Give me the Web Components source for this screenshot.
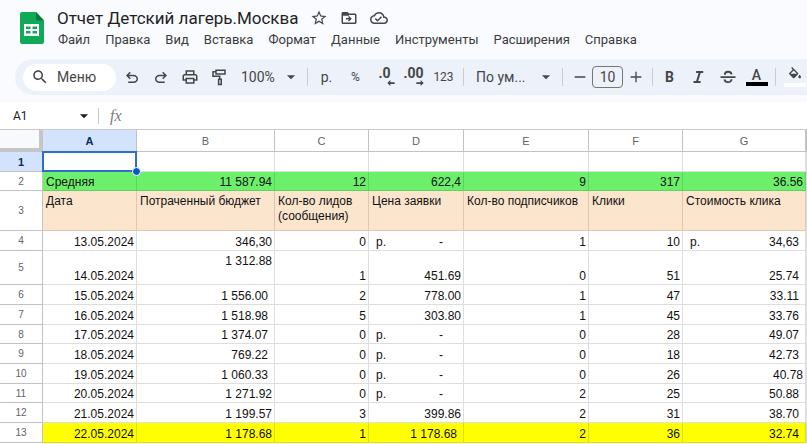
<!DOCTYPE html>
<html lang="ru">
<head>
<meta charset="utf-8">
<title>Отчет Детский лагерь.Москва</title>
<style>
  html, body { height: 100%; }
  body { margin: 0; overflow: hidden; background: #fff; color: #1f1f1f; font-family: Roboto, "Noto Sans", sans-serif; }
</style>
</head>
<body>
<sheet-app>
  <doc-header slot="header" heading="Отчет Детский лагерь.Москва">
    <menu-item>Файл</menu-item>
    <menu-item>Правка</menu-item>
    <menu-item>Вид</menu-item>
    <menu-item>Вставка</menu-item>
    <menu-item>Формат</menu-item>
    <menu-item>Данные</menu-item>
    <menu-item>Инструменты</menu-item>
    <menu-item>Расширения</menu-item>
    <menu-item>Справка</menu-item>
  </doc-header>
  <tool-bar slot="header"></tool-bar>
  <formula-bar></formula-bar>
  <sheet-grid></sheet-grid>
</sheet-app>

<script>
const ICONS = {
  star: '<path d="M22 9.24l-7.19-.62L12 2 9.19 8.63 2 9.24l5.46 4.73L5.82 21 12 17.27 18.18 21l-1.63-7.03L22 9.24zM12 15.4l-3.76 2.27 1-4.28-3.32-2.88 4.38-.38L12 6.1l1.71 4.04 4.38.38-3.32 2.88 1 4.28L12 15.4z"/>',
  move: '<path d="M20 6h-8l-2-2H4c-1.1 0-2 .9-2 2v12c0 1.1.9 2 2 2h16c1.100 0 2-.9 2-2V8c0-1.100-.9-2-2-2zm0 12H4V8h16v10zM12.200 13.900H8v-1.800h4.200l-1.500-1.500L12 9.300l3.700 3.700L12 16.700l-1.300-1.300z"/><path d="M3 5h7l2 2v2H3z"/>',
  cloud: '<path d="M19.350 10.040C18.670 6.590 15.640 4 12 4 9.110 4 6.600 5.640 5.350 8.040 2.340 8.360 0 10.910 0 14c0 3.310 2.690 6 6 6h13c2.760 0 5-2.240 5-5 0-2.640-2.050-4.780-4.650-4.960zM19 18H6c-2.210 0-4-1.790-4-4 0-2.050 1.530-3.760 3.560-3.970l1.070-.11.5-.95C8.080 7.140 9.940 6 12 6c2.620 0 4.880 1.860 5.390 4.430l.3 1.500 1.530.11c1.560.1 2.780 1.410 2.780 2.960 0 1.650-1.350 3-3 3zm-9-3.820l-2.090-2.090L6.500 13.500 10 17l6.010-6.010-1.410-1.410z"/>',
  search: '<path d="M15.500 14h-.79l-.28-.27C15.410 12.590 16 11.110 16 9.500 16 5.910 13.090 3 9.500 3S3 5.910 3 9.500 5.910 16 9.500 16c1.610 0 3.090-.59 4.230-1.570l.27.28v.79l5 4.990L20.490 19l-4.990-5zm-6 0C7.010 14 5 11.990 5 9.500S7.010 5 9.500 5 14 7.010 14 9.500 11.990 14 9.500 14z"/>',
  undo: '<path d="M7 20v-2h7.100q1.600 0 2.750-1T18 14.500t-1.150-2.500-2.750-1H7.800l2.600 2.600L9 15l-5-5 5-5 1.400 1.400L7.800 9h6.300q2.430 0 4.160 1.580T20 14.500t-1.740 3.920T14.100 20H7z"/>',
  redo: '<path d="M17 20v-2H9.900q-1.600 0-2.750-1T6 14.500 7.150 12t2.750-1h6.300l-2.600 2.600L15 15l5-5-5-5-1.400 1.400L16.200 9H9.900q-2.430 0-4.160 1.580T4 14.500t1.740 3.920T9.900 20H17z"/>',
  print: '<path d="M19 8h-1V3H6v5H5c-1.660 0-3 1.340-3 3v6h4v4h12v-4h4v-6c0-1.660-1.340-3-3-3zM8 5h8v3H8V5zm8 12v2H8v-4h8v2zm2-2v-2H6v2H4v-4c0-.55.45-1 1-1h14c.55 0 1 .45 1 1v4h-2z"/>',
  paint: '<g fill="none" stroke="currentColor" stroke-width="2"><path d="M8 3h12v5H8zM8 5H4v6h9v4"/><path d="M11.500 15h3.500v7h-3.500z"/></g>',
  italic: '<path d="M9.500 4v2.600h3.300l-3.300 10.800H6V20h9.500v-2.600h-3.200l3.300-10.800H19V4z"/>',
  strike: '<path d="M2 11h20v2.200H2z"/><path d="M7.800 9c0-5.300 8.200-5 8.900-.6M7.200 15.200c.9 5 9.600 4.900 9.400-.3" fill="none" stroke="currentColor" stroke-width="2.500"/>',
  minus: '<path d="M4 11h16v2H4z"/>',
  plus: '<path d="M4 11h7V4h2v7h7v2h-7v7h-2v-7H4z"/>',
  fill: '<path d="M16.560 8.940L7.620 0 6.210 1.410l2.380 2.380-5.150 5.150c-.59.59-.59 1.540 0 2.120l5.500 5.500c.29.29.68.44 1.060.44s.77-.15 1.060-.44l5.500-5.500c.59-.58.59-1.530 0-2.120zM5.210 10L10 5.210 14.790 10H5.210zM19 11.500s-2 2.170-2 3.500c0 1.100.9 2 2 2s2-.9 2-2c0-1.330-2-3.500-2-3.500z"/>',
  down: '<path d="M5 9h14l-7 7z"/>',
  left: '<path d="M1 12l9-9v7h13v5H10v6z"/>',
  right: '<path d="M23 12l-9-9v7H1v5h13v6z"/>'
};

function define(name, css, html, setup) {
  const tpl = document.createElement('template');
  tpl.innerHTML = `<style>*{box-sizing:border-box}button,input,select{font:inherit;color:inherit;background:none;border:0;margin:0;padding:0;outline:0}${css}</style>${html}`;
  customElements.define(name, class extends HTMLElement {
    constructor() {
      super();
      this.attachShadow({ mode: 'open' }).append(tpl.content.cloneNode(true));
    }
    connectedCallback() { if (setup) setup(this, this.shadowRoot); }
  });
}

define('ui-icon', `
  :host { display: inline-flex; flex: none; width: 18px; height: 18px; }
  svg { width: 100%; height: 100%; fill: currentColor; overflow: visible; }`,
  '<svg viewBox="0 0 24 24" aria-hidden="true"></svg>',
  (el, root) => { root.querySelector('svg').innerHTML = ICONS[el.getAttribute('name')]; });

define('menu-item', `
  :host { display: block; flex: none; }
  button { display: block; line-height: 16px; font-size: 13px; white-space: nowrap; color: #3a3c3e; }`,
  '<button type="button"><slot></slot></button>');

define('sheet-app', `
  :host { display: flex; flex-direction: column; height: 100vh; overflow: hidden; }
  header { flex: none; background: #f9fbfe; padding-bottom: 8px; }`,
  '<header><slot name="header"></slot></header><slot></slot>');

define('doc-header', `
  :host { display: flex; gap: 13px; padding: 8px 8px 9px 20px; }
  .logo { flex: none; width: 24px; height: 32px; margin-top: 4px; }
  .main { flex: 1; min-width: 0; }
  .top { display: flex; align-items: center; gap: 10px; height: 20px; }
  h1 { margin: 0; font-size: 17px; line-height: 20px; font-weight: 400; white-space: nowrap; }
  .top button { display: flex; justify-content: center; width: 20px; color: #444746; }
  nav { display: flex; gap: 15px; padding: 4px 0 2px 1px; }`,
  `<svg class="logo" viewBox="0 0 24 32" aria-hidden="true">
     <path fill="#0fa958" d="M2 0h14l8 8.500V30a2 2 0 0 1-2 2H2a2 2 0 0 1-2-2V2a2 2 0 0 1 2-2z"/>
     <path fill="#087a3c" d="M16 0v6.500a2 2 0 0 0 2 2h6z"/>
     <path fill="#fff" fill-rule="evenodd" d="M4 12h15v12H4zM6 14.500v2.500h4.500v-2.500zM12.500 14.500v2.500H17v-2.500zM6 19v2.500h4.500V19zM12.500 19v2.500H17V19z"/>
   </svg>
   <div class="main">
     <div class="top"><h1></h1>
       <button type="button" aria-label="Пометить"><ui-icon name="star"></ui-icon></button>
       <button type="button" aria-label="Переместить"><ui-icon name="move"></ui-icon></button>
       <button type="button" aria-label="Состояние документа"><ui-icon name="cloud"></ui-icon></button>
     </div>
     <nav aria-label="Меню"><slot></slot></nav>
   </div>`,
  (el, root) => { root.querySelector('h1').textContent = el.getAttribute('heading'); });

define('tool-button', `
  :host { display: block; flex: none; width: 29px; }
  button { width: 100%; height: 28px; display: flex; flex-direction: column; align-items: center; justify-content: center; }`,
  '<button type="button"><slot></slot></button>',
  (el, root) => { if (el.title) root.querySelector('button').setAttribute('aria-label', el.title); });

define('tool-select', `
  :host { display: block; flex: none; }
  label { display: grid; grid-template-columns: 1fr 18px; align-items: center; padding-right: 3px; }
  select { grid-area: 1 / 1 / 2 / 3; appearance: none; width: 100%; height: 28px; padding: 0 20px 0 8px; font-size: 14px; }
  ui-icon { grid-area: 1 / 2; width: 14px; height: 14px; justify-self: center; pointer-events: none; }`,
  '<label><select><option></option></select><ui-icon name="down"></ui-icon></label>',
  (el, root) => {
    root.querySelector('option').textContent = el.getAttribute('value');
    root.querySelector('select').setAttribute('aria-label', el.getAttribute('label'));
  });

define('tool-bar', `
  :host { display: flex; align-items: center; height: 36px; margin-left: 15px; padding-left: 8px; border-radius: 18px 0 0 18px; background: #edf1fa; color: #444746; overflow: hidden; font-size: 14px; }
  .menu { flex: none; display: flex; align-items: center; gap: 8px; width: 93px; height: 27px; margin-right: 1px; padding-left: 8px; border-radius: 14px; background: #fff; }
  i { flex: none; width: 1px; height: 18px; margin: 0 4px; background: #c9ccd3; }
  .zoom { width: 70px; }
  .font { width: 90px; }
  .small { font-size: 12px; }
  .bold { font-weight: 700; line-height: 12px; }
  .arrow { width: 8px; height: 8px; align-self: flex-end; margin-right: 4px; }
  .size { flex: none; width: 31px; height: 22px; border: 1px solid #747775; border-radius: 4px; text-align: center; }
  .narrow { width: 25px; }
  .wide { width: 31px; }
  .strong { font-weight: 700; font-size: 14px; }
  .letter { line-height: 14px; font-weight: 500; }
  .bar { flex: none; width: 22px; height: 4px; background: #000; }
  .white { background: #fff; }
  .tint { width: 16px; height: 16px; }`,
  `<button class="menu" type="button"><ui-icon name="search"></ui-icon>Меню</button>
   <tool-button title="Отменить"><ui-icon name="undo"></ui-icon></tool-button>
   <tool-button title="Повторить"><ui-icon name="redo"></ui-icon></tool-button>
   <tool-button title="Печать"><ui-icon name="print"></ui-icon></tool-button>
   <tool-button title="Копировать форматирование"><ui-icon name="paint"></ui-icon></tool-button>
   <tool-select class="zoom" value="100%" label="Масштаб"></tool-select><i></i>
   <tool-button>р.</tool-button>
   <tool-button class="small">%</tool-button>
   <tool-button><span class="bold">.0</span><ui-icon class="arrow" name="left"></ui-icon></tool-button>
   <tool-button><span class="bold">.00</span><ui-icon class="arrow" name="right"></ui-icon></tool-button>
   <tool-button class="small wide">123</tool-button><i></i>
   <tool-select class="font" value="По ум..." label="Шрифт"></tool-select><i></i>
   <tool-button class="narrow" title="Уменьшить размер"><ui-icon name="minus" class="tint"></ui-icon></tool-button>
   <input class="size" value="10" aria-label="Размер шрифта">
   <tool-button class="narrow" title="Увеличить размер"><ui-icon name="plus" class="tint"></ui-icon></tool-button><i></i>
   <tool-button class="strong narrow">B</tool-button>
   <tool-button class="wide" title="Курсив"><ui-icon name="italic"></ui-icon></tool-button>
   <tool-button title="Зачеркнутый"><ui-icon name="strike"></ui-icon></tool-button>
   <tool-button><span class="letter">A</span><span class="bar"></span></tool-button><i></i>
   <tool-button title="Цвет заливки"><ui-icon name="fill" class="tint"></ui-icon><span class="bar white"></span></tool-button>`);

define('formula-bar', `
  :host { flex: none; display: flex; align-items: center; height: 26px; background: #fff; }
  .name { width: 64px; margin-left: 13px; font-size: 12px; }
  button { display: flex; }
  .down { width: 14px; height: 14px; }
  i { width: 1px; height: 16px; margin: 0 11px 0 7px; background: #c7c7c7; }
  label { font: italic 16px "Liberation Serif", serif; color: #7a7d80; }
  .formula { flex: 1; min-width: 0; margin-left: 8px; font-size: 12px; }`,
  `<input class="name" value="A1" aria-label="Поле имени">
   <button type="button" aria-label="Диапазоны"><ui-icon class="down" name="down"></ui-icon></button><i></i>
   <label for="fx">fx</label><input class="formula" id="fx">`);

/* Cell codes: "<" shifts a number in from the edge, "^" aligns to the top, "$" splits a rouble sign from its amount. */
const WIDTHS = [43, 94, 138, 94, 95, 125, 94, 123];
const ROWS = [
  [20, '', ['', '', '', '', '', '', '']],
  [19, 'green', ['Средняя', '11 587.94', '12', '622,4', '9', '317', '36.56']],
  [40, 'peach', ['Дата', 'Потраченный бюджет', 'Кол-во лидов (сообщения)', 'Цена заявки', 'Кол-во подписчиков', 'Клики', 'Стоимость клика']],
  [20, '', ['13.05.2024', '346,30', '0', '$-', '1', '10', '$34,63']],
  [34, '', ['14.05.2024', '^1 312.88', '1', '451.69', '0', '51', '<25.74']],
  [20, '', ['15.05.2024', '<1 556.00', '2', '778.00', '1', '47', '<33.11']],
  [20, '', ['16.05.2024', '<1 518.98', '5', '303.80', '1', '45', '<33.76']],
  [19, '', ['17.05.2024', '<1 374.07', '0', '$-', '0', '28', '<49.07']],
  [20, '', ['18.05.2024', '<769.22', '0', '$-', '0', '18', '<42.73']],
  [20, '', ['19.05.2024', '<1 060.33', '0', '$-', '0', '26', '40.78']],
  [19, '', ['20.05.2024', '1 271.92', '0', '$-', '2', '25', '<50.88']],
  [20, '', ['21.05.2024', '1 199.57', '3', '399.86', '2', '31', '<38.70']],
  [20, 'yellow', ['22.05.2024', '1 178.68', '1', '<1 178.68', '2', '36', '<32.74']]
];

define('sheet-grid', `
  :host { display: block; flex: 1; min-height: 0; overflow: hidden; font-family: "Liberation Sans", Arial, sans-serif; }
  table { width: 100%; table-layout: fixed; border-collapse: separate; border-spacing: 0; border-top: 1px solid #c8cacc; }
  th { padding: 0; font-size: 10px; font-weight: 400; color: #5f6368; border: solid #c0c2c4; border-width: 0 1px 1px 0; vertical-align: middle; }
  thead th { height: 22px; font-size: 11px; }
  th.on { background: #d3e3fd; color: #0b2a5c; font-weight: 700; font-size: 11px; }
  th.corner { background: #f8f9fa; border: solid #c4c5c7; border-width: 0 4px 4px 0; }
  td { padding: 3px 2px 0 3px; font-size: 12px; line-height: 15px; color: #111; text-align: right; vertical-align: bottom; border: solid rgba(0,0,0,.13); border-width: 0 1px 1px 0; }
  .green td { background: #6cf06c; }
  .yellow td { background: #ff0; }
  .peach td { background: #fce5cd; vertical-align: top; }
  .text { text-align: left; }
  td.shift { padding-right: 6px; }
  td.up { vertical-align: top; }
  .money { display: flex; justify-content: space-between; padding: 0 4px; }
  .money.dash { padding-right: 18px; }
  .active { position: relative; z-index: 1; }
  .active div { position: absolute; inset: -1px; border: 2px solid #2a6fcb; }
  .active div::after { content: ""; position: absolute; right: -6px; bottom: -6px; width: 7px; height: 7px; border: 1px solid #fff; border-radius: 50%; background: #0b57d0; box-sizing: content-box; }`,
  '<table><colgroup></colgroup><thead><tr></tr></thead><tbody></tbody></table>',
  (el, root) => {
    root.querySelector('colgroup').innerHTML = WIDTHS.map(w => `<col style="width:${w}px">`).join('') + '<col>';
    root.querySelector('thead tr').innerHTML = '<th class="corner"></th>' +
      [...'ABCDEFG'].map((c, i) => `<th scope="col"${i ? '' : ' class="on"'}>${c}</th>`).join('') + '<th></th>';
    const cell = (v, r, c) => {
      if (r === 0 && c === 0) return '<td class="active"><div></div></td>';
      const code = v[0], body = v.replace(/^[<^$]/, '');
      if (code === '$') return `<td><div class="money${body === '-' ? ' dash' : ''}"><span>р.</span><span>${body}</span></div></td>`;
      const cls = code === '<' ? 'shift' : code === '^' ? 'up' : /^[А-Я]/.test(v) ? 'text' : '';
      return `<td class="${cls}">${body}</td>`;
    };
    root.querySelector('tbody').innerHTML = ROWS.map(([h, cls, cells], r) =>
      `<tr class="${cls}" style="height:${h}px"><th scope="row"${r ? '' : ' class="on"'}>${r + 1}</th>${cells.map((v, c) => cell(v, r, c)).join('')}<td style="background:#fff"></td></tr>`).join('');
  });
</script>
</body>
</html>
